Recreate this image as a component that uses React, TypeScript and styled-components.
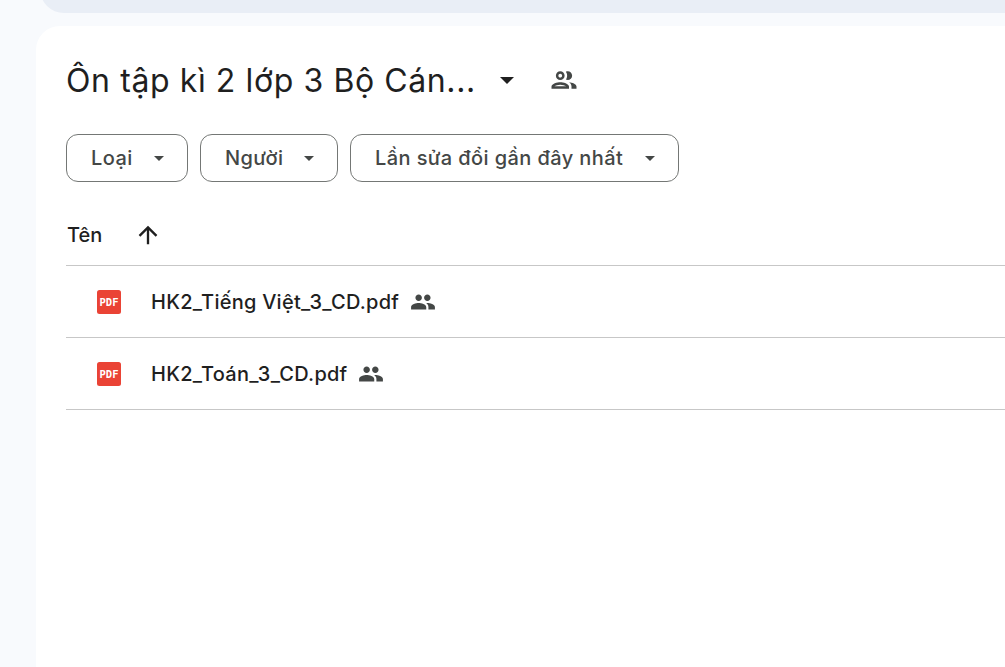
import styled, { createGlobalStyle } from "styled-components";

const PEOPLE =
  "M16 11c1.66 0 2.99-1.34 2.99-3S17.66 5 16 5c-1.66 0-3 1.34-3 3s1.34 3 3 3zm-8 0c1.66 0 2.99-1.34 2.99-3S9.66 5 8 5C6.34 5 5 6.34 5 8s1.34 3 3 3zm0 2c-2.33 0-7 1.17-7 3.5V19h14v-2.5c0-2.33-4.67-3.5-7-3.5zm8 0c-.29 0-.62.02-.97.05 1.16.84 1.97 1.97 1.97 3.45V19h6v-2.5c0-2.33-4.67-3.5-7-3.5z";
const PEOPLE_OUTLINE =
  "M9 13.75c-2.34 0-7 1.17-7 3.5V19h14v-1.75c0-2.33-4.66-3.5-7-3.5zM4.34 17c.84-.58 2.87-1.25 4.66-1.25s3.82.67 4.66 1.25H4.34zM9 12c1.93 0 3.5-1.57 3.5-3.5S10.93 5 9 5 5.5 6.57 5.5 8.5 7.07 12 9 12zm0-5c.83 0 1.5.67 1.5 1.5S9.83 10 9 10s-1.5-.67-1.5-1.5S8.17 7 9 7zm7.04 6.81c1.16.84 1.96 1.96 1.96 3.44V19h4v-1.75c0-2.02-3.5-3.17-5.96-3.44zM15 12c1.93 0 3.5-1.57 3.5-3.5S16.93 5 15 5c-.54 0-1.04.13-1.5.35.63.89 1 1.98 1 3.15s-.37 2.26-1 3.15c.46.22.96.35 1.5.35z";

const GlobalStyle = createGlobalStyle`
  html, body {
    margin: 0;
    height: 100%;
    overflow: hidden;
    background: #f8fafd;
    font-family: "Inter", "Roboto", "Noto Sans", sans-serif;
  }
`;

const Page = styled.div`
  height: 667px;
  display: flex;
  flex-direction: column;
`;

/* the bar above is cut by the window top, only its lower part shows */
const TopBar = styled.div`
  height: 24px;
  margin: -11px 0 0 40px;
  flex: none;
  background: #e9eef6;
  border-bottom-left-radius: 24px;
`;

const Card = styled.main`
  flex: 1;
  margin: 13px 0 0 36px;
  padding: 0 0 0 30px;
  background: #fff;
  border-top-left-radius: 24px;
`;

const TitleRow = styled.div`
  display: flex;
  align-items: center;
  height: 108px;
`;

const Title = styled.h1`
  margin: 0;
  font-size: 32px;
  font-weight: 400;
  letter-spacing: 0.6px;
  color: #1f1f1f;
  white-space: nowrap;
`;

const Caret = styled.span<{ $big?: boolean }>`
  flex: none;
  width: 0;
  height: 0;
  border-style: solid;
  border-color: ${(p) => (p.$big ? "#1f1f1f" : "#444746")} transparent transparent transparent;
  border-width: ${(p) => (p.$big ? "7px 7px 0 7px" : "5px 5px 0 5px")};
`;

const TitleCaret = styled(Caret)`
  margin-left: 24px;
`;

const ShareIcon = styled.svg`
  margin-left: 35px;
  width: 30px;
  height: 30px;
  fill: #444746;
`;

const Filters = styled.div`
  display: flex;
  gap: 12px;
`;

const Chip = styled.button<{ $w: number }>`
  box-sizing: border-box;
  width: ${(p) => p.$w}px;
  height: 48px;
  padding: 0 23px 0 24px;
  display: flex;
  align-items: center;
  justify-content: space-between;
  background: #fff;
  border: 1px solid #747775;
  border-radius: 12px;
  font: 500 20px "Inter", "Roboto", sans-serif;
  letter-spacing: 0.4px;
  color: #444746;
  white-space: nowrap;
`;

const SortHeader = styled.div`
  display: flex;
  align-items: center;
  height: 84px;
  padding: 23px 0 0 1px;
  border-bottom: 1px solid #c7c7c7;
  box-sizing: border-box;
  font-size: 20px;
  font-weight: 500;
  color: #1f1f1f;
`;

const ArrowIcon = styled.svg`
  margin-left: 32px;
  width: 28px;
  height: 28px;
  fill: #1f1f1f;
`;

const FileRow = styled.div`
  display: flex;
  align-items: center;
  height: 72px;
  box-sizing: border-box;
  border-bottom: 1px solid #c7c7c7;
  padding-left: 31px;
`;

const PdfIcon = styled.svg`
  flex: none;
  width: 24px;
  height: 24px;
  margin-top: 1px;
`;

const FileName = styled.span`
  margin-left: 30px;
  font-size: 20px;
  font-weight: 500;
  letter-spacing: 0.25px;
  color: #1f1f1f;
  white-space: nowrap;
`;

const SharedIcon = styled.svg`
  margin-left: 11px;
  width: 26px;
  height: 26px;
  fill: #444746;
`;

const PdfGlyph = () => (
  <PdfIcon viewBox="0 0 24 24">
    <rect width="24" height="24" rx="2.5" fill="#ea4335" />
    <text
      x="12"
      y="15.8"
      textAnchor="middle"
      fontFamily="'DejaVu Sans Mono', monospace"
      fontWeight="700"
      fontSize="10.5"
      fill="#fff"
    >
      PDF
    </text>
  </PdfIcon>
);

const filters = [
  { label: "Loại", width: 122 },
  { label: "Người", width: 138 },
  { label: "Lần sửa đổi gần đây nhất", width: 329 },
];

// ten file giu dang to hop dau nhu trong anh goc
const files = ["HK2_Tiê\u0301ng Viê\u0323t_3_CD.pdf", "HK2_Toán_3_CD.pdf"];
const folderName = "Ôn tập kì 2 lớp 3 Bô\u0323 Cán...";

export default function App() {
  return (
    <Page>
      <GlobalStyle />
      <TopBar />
      <Card>
        <TitleRow>
          <Title>{folderName}</Title>
          <TitleCaret $big />
          <ShareIcon viewBox="0 0 24 24">
            <path d={PEOPLE_OUTLINE} />
          </ShareIcon>
        </TitleRow>
        <Filters>
          {filters.map((f) => (
            <Chip key={f.label} $w={f.width}>
              {f.label}
              <Caret />
            </Chip>
          ))}
        </Filters>
        <SortHeader>
          Tên
          <ArrowIcon viewBox="0 0 24 24">
            <path d="M4 12l1.41 1.41L11 7.83V20h2V7.83l5.58 5.59L20 12l-8-8-8 8z" />
          </ArrowIcon>
        </SortHeader>
        {files.map((name) => (
          <FileRow key={name}>
            <PdfGlyph />
            <FileName>{name}</FileName>
            <SharedIcon viewBox="0 0 24 24">
              <path d={PEOPLE} />
            </SharedIcon>
          </FileRow>
        ))}
      </Card>
    </Page>
  );
}
